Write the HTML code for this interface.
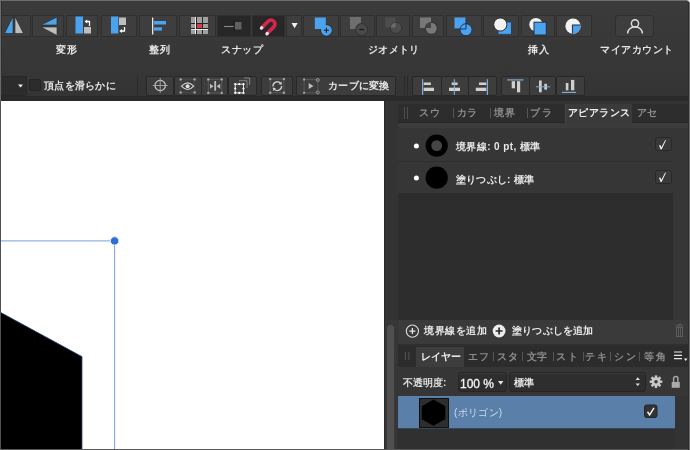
<!DOCTYPE html>
<html lang="ja"><head><meta charset="utf-8">
<style>
*{box-sizing:border-box;margin:0;padding:0}
html,body{width:690px;height:450px;overflow:hidden;background:#393939;font-family:"Liberation Sans",sans-serif;}
.a{position:absolute}
.t{position:absolute;white-space:nowrap;color:#e6e6e6;font-size:10px;line-height:12px;font-weight:700;will-change:transform}
.s{}
.g{color:#8c8c8c}
.b1{position:absolute;top:15px;height:22px;background:#3e3e3e;border:1px solid #2f2f2f;border-radius:1px}
.b2{position:absolute;top:76px;height:20px;background:#3d3d3d;border:1px solid #282828;border-radius:2px}
svg{position:absolute;left:0;top:0;overflow:visible}
</style></head><body>
<!-- top line -->
<div class="a" style="left:0;top:0;width:690px;height:96px;background:linear-gradient(#3b3b3b,#343434)"></div>
<div class="a" style="left:0;top:0;width:690px;height:1px;background:#6c6c6c"></div>


<!-- row1 buttons -->
<div class="b1" style="left:0;width:31px"></div>
<div class="b1" style="left:32px;width:32px"></div>
<div class="b1" style="left:66px;width:32px"></div>
<div class="b1" style="left:101px;width:36px"></div>
<div class="b1" style="left:139px;width:38px"></div>
<div class="b1" style="left:179px;width:37px"></div>
<div class="b1" style="left:217px;width:34px;background:#272727"></div>
<div class="b1" style="left:252px;width:33px;background:#272727"></div>
<div class="b1" style="left:286px;width:16px"></div>
<div class="b1" style="left:303px;width:36px"></div>
<div class="b1" style="left:340px;width:35px"></div>
<div class="b1" style="left:376px;width:34px"></div>
<div class="b1" style="left:412px;width:32px"></div>
<div class="b1" style="left:446px;width:36px"></div>
<div class="b1" style="left:483px;width:36px"></div>
<div class="b1" style="left:521px;width:34px"></div>
<div class="b1" style="left:556px;width:36px"></div>
<div class="b1" style="left:615px;width:39px;border-radius:3px"></div>

<!-- row1 labels -->
<div class="t s" style="left:56px;top:44px;letter-spacing:1px">変形</div>
<div class="t s" style="left:149px;top:44px;letter-spacing:1px">整列</div>
<div class="t s" style="left:221px;top:44px;letter-spacing:0.5px">スナップ</div>
<div class="t s" style="left:368px;top:44px;letter-spacing:0.3px">ジオメトリ</div>
<div class="t s" style="left:528px;top:44px;letter-spacing:1px">挿入</div>
<div class="t s" style="left:600px;top:44px;letter-spacing:0.5px">マイアカウント</div>

<!-- row2 -->
<div class="b2" style="left:-2px;width:29px;background:#2c2c2c"></div>
<div class="a" style="left:29px;top:79px;width:12px;height:12px;background:#2c2c2c;border:1px solid #252525;border-radius:2px"></div>
<div class="t s" style="left:44px;top:80px;letter-spacing:0.3px">頂点を滑らかに</div>
<div class="a" style="left:137px;top:76px;width:1px;height:20px;background:#2a2a2a"></div>
<div class="b2" style="left:146px;width:28px"></div>
<div class="b2" style="left:174px;width:28px"></div>
<div class="b2" style="left:201px;width:27px"></div>
<div class="b2" style="left:228px;width:29px"></div>
<div class="b2" style="left:261px;width:32px"></div>
<div class="b2" style="left:296px;width:100px"></div>
<div class="t s" style="left:328px;top:80px;letter-spacing:0.3px">カーブに変換</div>
<div class="a" style="left:404px;top:76px;width:1px;height:20px;background:#2a2a2a"></div>
<div class="a" style="left:407px;top:76px;width:1px;height:20px;background:#2a2a2a"></div>
<div class="b2" style="left:412px;width:30px"></div>
<div class="b2" style="left:441px;width:28px"></div>
<div class="b2" style="left:468px;width:29px"></div>
<div class="b2" style="left:501px;width:29px"></div>
<div class="b2" style="left:529px;width:27px"></div>
<div class="b2" style="left:556px;width:29px"></div>

<!-- toolbar bottom border -->
<div class="a" style="left:0;top:96px;width:690px;height:5px;background:#2a2a2a"></div>

<!-- canvas -->
<div class="a" style="left:0;top:101px;width:384px;height:349px;background:#fff"></div>
<div class="a" style="left:0;top:0;width:1px;height:101px;background:#6a6a6a"></div>
<div class="a" style="left:1px;top:1px;width:1px;height:95px;background:#303030"></div>
<div class="a" style="left:0;top:101px;width:1px;height:349px;background:#525252"></div>
<div class="a" style="left:0;top:449px;width:384px;height:1px;background:#5a5a5a"></div>

<!-- gutter -->
<div class="a" style="left:384px;top:101px;width:14px;height:349px;background:#333"></div>
<div class="a" style="left:384px;top:101px;width:1px;height:349px;background:#2a2a2a"></div>
<div class="a" style="left:385px;top:320px;width:12px;height:130px;background:#373737"></div>
<div class="a" style="left:387px;top:325px;width:7px;height:130px;background:#505050;border-radius:3.5px"></div>

<!-- right panel -->
<div class="a" style="left:398px;top:101px;width:292px;height:349px;background:#333"></div>

<!-- tab bar -->
<div class="a" style="left:398px;top:104px;width:290px;height:19px;background:#2d2d2d;border-bottom:1px solid #262626"></div>
<div class="a" style="left:565px;top:104px;width:67px;height:19px;background:#3a3a3a;border-left:1px solid #474747"></div>
<div class="a" style="left:398px;top:123px;width:290px;height:5px;background:#3c3c3c;border-radius:2px 0 0 2px"></div>
<div class="t g" style="left:419px;top:107px;letter-spacing:0.5px">スウ</div>
<div class="t g" style="left:457px;top:107px">カラ</div>
<div class="t g" style="left:494px;top:107px;letter-spacing:1px">境界</div>
<div class="t g" style="left:530px;top:107px;letter-spacing:1.5px">ブラ</div>
<div class="t" style="left:568px;top:107px;letter-spacing:0.4px;color:#f0f0f0">アピアランス</div>
<div class="t g" style="left:637px;top:107px">アセ</div>

<!-- list rows -->
<div class="a" style="left:673px;top:128px;width:16px;height:192px;background:#363636"></div>
<div class="a" style="left:398px;top:128px;width:275px;height:65px;background:#363636"></div>
<div class="a" style="left:398px;top:161px;width:275px;height:1px;background:#2e2e2e"></div>
<div class="a" style="left:398px;top:193px;width:275px;height:127px;background:#2d2d2d"></div>
<div class="t" style="left:456px;top:141px;letter-spacing:0.4px">境界線: 0 pt, 標準</div>
<div class="t" style="left:456px;top:174px;letter-spacing:0.2px">塗りつぶし: 標準</div>

<!-- footer -->
<div class="a" style="left:398px;top:320px;width:290px;height:24px;background:#3a3a3a"></div>
<div class="a" style="left:398px;top:344px;width:290px;height:2px;background:#2f2f2f"></div>
<div class="t" style="left:424px;top:325px;letter-spacing:0.5px">境界線を追加</div>
<div class="t" style="left:512px;top:325px;letter-spacing:0.2px">塗りつぶしを追加</div>

<!-- layers tabs -->
<div class="a" style="left:398px;top:346px;width:290px;height:21px;background:#2c2c2c"></div>
<div class="a" style="left:416px;top:347px;width:48px;height:20px;background:#3d3d3d"></div>
<div class="t" style="left:421px;top:351px;font-weight:700;color:#f0f0f0">レイヤー</div>
<div class="t g" style="left:468px;top:351px;letter-spacing:1px">エフ</div>
<div class="t g" style="left:497px;top:351px;letter-spacing:1px">スタ</div>
<div class="t g" style="left:527px;top:351px">文字</div>
<div class="t g" style="left:556px;top:351px;letter-spacing:1.5px">スト</div>
<div class="t g" style="left:585px;top:351px;letter-spacing:2px">テキ</div>
<div class="t g" style="left:614px;top:351px;letter-spacing:2px">シン</div>
<div class="t g" style="left:644px;top:351px;letter-spacing:2px">等角</div>

<!-- opacity row -->
<div class="a" style="left:398px;top:367px;width:291px;height:29px;background:#363636"></div>
<div class="t" style="left:403px;top:377px;color:#dcdcdc">不透明度:</div>
<div class="a" style="left:458px;top:372px;width:49px;height:20px;background:#2e2e2e;border:1px solid #252525;border-radius:3px;box-shadow:inset 0 1px 0 #3a3a3a"></div>
<div class="t" style="left:460px;top:378px;font-size:12px;color:#f4f4f4;font-weight:400;-webkit-text-stroke:0.3px #f4f4f4">100 %</div>
<div class="a" style="left:509px;top:372px;width:137px;height:20px;background:#2e2e2e;border:1px solid #252525;border-radius:3px;box-shadow:inset 0 1px 0 #3a3a3a"></div>
<div class="t" style="left:514px;top:377px">標準</div>

<!-- layer row -->
<div class="a" style="left:398px;top:396px;width:277px;height:33px;background:#5a7fa9;border-bottom:1px solid #33475f"></div>
<div class="a" style="left:419px;top:398px;width:30px;height:30px;background:#2e2e2e;border:1px solid #111"></div>
<div class="t" style="left:454px;top:407px;letter-spacing:0.3px;color:#cddcee;font-weight:400">(ポリゴン)</div>
<div class="a" style="left:398px;top:429px;width:277px;height:20px;background:#303030"></div>
<div class="a" style="left:384px;top:449px;width:306px;height:1px;background:#575757"></div>

<div class="a" style="left:688px;top:1px;width:1px;height:449px;background:#2c2c2c"></div>
<div class="a" style="left:689px;top:0;width:1px;height:450px;background:#6a6a6a"></div>
<svg width="690" height="450" viewBox="0 0 690 450">
 <!-- flip h -->
 <path d="M4.5 33.5 L13 16.5 L13 33.5Z" fill="#4ba3f0" stroke="#222" stroke-width="0.6"/>
 <path d="M15 16.5 L15 33.5 L23.5 33.5Z" fill="#bdbdbd" stroke="#222" stroke-width="0.6"/>
 <!-- flip v -->
 <path d="M41 25 L57 17 L57 25Z" fill="#4ba3f0" stroke="#222" stroke-width="0.6"/>
 <path d="M41 27 L57 27 L57 35.5Z" fill="#bdbdbd" stroke="#222" stroke-width="0.6"/>
 <!-- rotate left -->
 <rect x="75.5" y="16.5" width="7.5" height="17" fill="#4ba3f0"/>
 <rect x="84" y="27" width="7" height="6.5" fill="#bdbdbd"/>
 <path d="M89.5 26 V21.5 H86.5" fill="none" stroke="#fff" stroke-width="1.3"/>
 <path d="M84.5 21.5 L87.2 19.4 L87.2 23.6Z" fill="#fff"/>
 <!-- rotate right -->
 <rect x="111" y="16.5" width="7.3" height="17" fill="#4ba3f0"/>
 <rect x="119" y="17.5" width="7" height="7.5" fill="#bdbdbd"/>
 <path d="M124.5 27 V31 H121.5" fill="none" stroke="#fff" stroke-width="1.3"/>
 <path d="M119.3 31 L122 28.9 L122 33.1Z" fill="#fff"/>
 <!-- align -->
 <rect x="152" y="17.5" width="1.3" height="17" fill="#e8e8e8"/>
 <rect x="154" y="21" width="12" height="3.5" fill="#4ba3f0"/>
 <rect x="154" y="27.3" width="8" height="3.3" fill="#4ba3f0"/>
 <!-- snap grid -->
 <g shape-rendering="crispEdges">
 <rect x="191" y="17" width="17" height="17" fill="#a0a0a0"/>
 <rect x="197" y="24" width="5" height="4" fill="#e0384c"/>
 <rect x="196" y="17" width="1" height="17" fill="#262626"/>
 <rect x="202" y="17" width="1" height="17" fill="#262626"/>
 <rect x="191" y="23" width="17" height="1" fill="#262626"/>
 <rect x="191" y="28" width="17" height="1" fill="#262626"/>
 <rect x="195" y="17" width="1" height="17" fill="#e8e8e8"/>
 <rect x="191" y="29" width="17" height="1" fill="#e8e8e8"/>
 </g>
 <!-- snap dark icon -->
 <rect x="234.5" y="22" width="7" height="7.5" fill="#606060"/>
 <path d="M224 26.5 H234" stroke="#8a8a8a" stroke-width="1.1"/>
 <path d="M234.2 21 V31" stroke="#151515" stroke-width="1"/>
 <!-- magnet -->
 <path d="M261.4 28.1 L268.2 21.3 A3.95 3.95 0 0 1 273.8 26.9 L266.9 33.8" fill="none" stroke="#d3264a" stroke-width="3.7"/>
 <path d="M261.4 28.1 L261.8 27.7 M266.9 33.8 L267.3 33.4" stroke="#f0e4e8" stroke-width="3.2" stroke-linecap="round"/>
 <!-- dropdown tri -->
 <path d="M291.5 23 H297.7 L294.6 28.3Z" fill="#f0f0f0"/>
 <!-- geometry add -->
 <circle cx="326.4" cy="30.3" r="6.2" fill="#2e2e2e"/>
 <rect x="314.8" y="17.5" width="11" height="11.5" fill="#4ba3f0"/>
 <circle cx="326.4" cy="30.3" r="5.4" fill="#4ba3f0"/>
 <path d="M326.4 27.8 V32.8 M323.9 30.3 H328.9" stroke="#1c1c1c" stroke-width="1.1"/>
 <!-- subtract -->
 <rect x="350" y="17" width="11" height="12" fill="#6e6e6e"/>
 <circle cx="361.6" cy="29.5" r="6.4" fill="#333"/>
 <circle cx="361.6" cy="29.5" r="5.4" fill="#4a4a4a"/>
 <path d="M359.3 29.5 H364" stroke="#1a1a1a" stroke-width="1.3"/>
 <!-- intersect -->
 <rect x="385.2" y="17.5" width="10.5" height="10" fill="#4c4c4c"/>
 <circle cx="396" cy="27.9" r="6" fill="#353535"/>
 <circle cx="396" cy="27.9" r="5.2" fill="#4c4c4c"/>
 <path d="M390.8 27.5 A5.2 5.2 0 0 1 395.6 22.7 V27.5Z" fill="#6a6a6a"/>
 <!-- xor -->
 <rect x="420" y="17.5" width="11" height="10.5" fill="#787878"/>
 <circle cx="431.3" cy="28.3" r="6.4" fill="#333"/>
 <circle cx="431.3" cy="28.3" r="5.5" fill="#787878"/>
 <path d="M425.8 28 A5.5 5.5 0 0 1 431 22.8 V28Z" fill="#444"/>
 <!-- divide -->
 <rect x="454.5" y="17.5" width="11.5" height="11.5" fill="#4ba3f0"/>
 <circle cx="466" cy="29.7" r="6" fill="#4ba3f0" stroke="#1f3550" stroke-width="1"/>
 <path d="M454.5 29 H466 V17.5" fill="none" stroke="#1f3550" stroke-width="1"/>
 <!-- insert behind -->
 <rect x="498" y="22" width="13.3" height="12.3" fill="#4ba3f0" stroke="#263a52" stroke-width="0.8"/>
 <circle cx="500.3" cy="24.5" r="6.6" fill="#f2f2f2" stroke="#2a2a2a" stroke-width="1"/>
 <!-- insert front -->
 <circle cx="535.9" cy="24.5" r="6.6" fill="#f2f2f2"/>
 <rect x="534" y="22.2" width="12.3" height="12.8" fill="#4ba3f0" stroke="#1f2f45" stroke-width="1"/>
 <!-- insert inside -->
 <circle cx="573" cy="26.2" r="7.6" fill="#f2f2f2"/>
 <clipPath id="cc"><circle cx="573" cy="26.2" r="7.6"/></clipPath>
 <rect x="572.4" y="25" width="11" height="10" fill="#4ba3f0" stroke="#1f2f45" stroke-width="1" clip-path="url(#cc)"/>
 <!-- account -->
 <circle cx="635" cy="23.4" r="3.6" fill="none" stroke="#e0e0e0" stroke-width="1.4"/>
 <path d="M627.6 33.4 A7.4 6.6 0 0 1 642.4 33.4" fill="none" stroke="#e0e0e0" stroke-width="1.4"/>

 <!-- row2 dropdown tri -->
 <path d="M18 84.5 H23 L20.5 87.5Z" fill="#eee"/>
 <!-- crosshair -->
 <circle cx="160.2" cy="85.5" r="5.2" fill="none" stroke="#c8c8c8" stroke-width="1.2"/>
 <path d="M152.8 85.5 H167.8 M160.2 78 V93" stroke="#a8a8a8" stroke-width="0.9"/>
 <!-- eye -->
 <path d="M180.7 79.4 H194.6 V92.4 H180.7Z" fill="none" stroke="#555" stroke-width="0.5"/>
 <circle cx="180.7" cy="79.4" r="1.2" fill="#a8a8a8"/><circle cx="194.6" cy="79.4" r="1.2" fill="#a8a8a8"/>
 <circle cx="180.7" cy="92.4" r="1.2" fill="#a8a8a8"/><circle cx="194.6" cy="92.4" r="1.2" fill="#a8a8a8"/>
 <path d="M181.5 86.2 Q187.6 79.5 193.7 86.2 Q187.6 92.8 181.5 86.2Z" fill="none" stroke="#cfcfcf" stroke-width="1.2"/>
 <circle cx="187.6" cy="86.2" r="2" fill="#e0e0e0"/>
 <!-- transform frame -->
 <path d="M208.3 79.4 H221.7 V92.9 H208.3Z" fill="none" stroke="#6a6a6a" stroke-width="0.6"/>
 <circle cx="208.3" cy="79.4" r="1.2" fill="#a8a8a8"/><circle cx="221.7" cy="79.4" r="1.2" fill="#a8a8a8"/>
 <circle cx="208.3" cy="92.9" r="1.2" fill="#a8a8a8"/><circle cx="221.7" cy="92.9" r="1.2" fill="#a8a8a8"/>
 <rect x="214.3" y="81" width="1.8" height="9.7" fill="#bdbdbd"/>
 <path d="M213.6 86.3 L210 83.8 V88.8Z M216.6 86.3 L220.2 83.8 V88.8Z" fill="#bdbdbd"/>
 <!-- dotted square -->
 <path d="M244 78 H249.6 V85" fill="none" stroke="#8a8a8a" stroke-width="0.9"/>
 <path d="M239 80.7 H247 V88" fill="none" stroke="#8a8a8a" stroke-width="0.9"/>
 <rect x="235.2" y="84.2" width="8.3" height="8.7" fill="#3f3f3f" stroke="#f0f0f0" stroke-width="0.9"/>
 <g fill="#fff"><circle cx="235.2" cy="84.2" r="1.1"/><circle cx="239.3" cy="84.2" r="1.1"/><circle cx="243.5" cy="84.2" r="1.1"/>
 <circle cx="235.2" cy="88.5" r="1.1"/><circle cx="243.5" cy="88.5" r="1.1"/>
 <circle cx="235.2" cy="92.9" r="1.1"/><circle cx="239.3" cy="92.9" r="1.1"/><circle cx="243.5" cy="92.9" r="1.1"/></g>
 <!-- refresh -->
 <path d="M270.2 79.1 H283.9 V92.8 H270.2Z" fill="none" stroke="#6a6a6a" stroke-width="0.6"/>
 <circle cx="270.2" cy="79.1" r="1.2" fill="#a8a8a8"/><circle cx="283.9" cy="79.1" r="1.2" fill="#a8a8a8"/>
 <circle cx="270.2" cy="92.8" r="1.2" fill="#a8a8a8"/><circle cx="283.9" cy="92.8" r="1.2" fill="#a8a8a8"/>
 <path d="M273 86.5 A4.3 4.3 0 0 1 280.5 83.3 M281.6 86 A4.3 4.3 0 0 1 274.1 89.1" fill="none" stroke="#cfcfcf" stroke-width="1.3"/>
 <path d="M281.5 81.5 L281.8 84.8 L278.6 84.2Z M273.1 90.9 L272.8 87.6 L276 88.2Z" fill="#cfcfcf"/>
 <!-- convert to curves -->
 <path d="M304.1 79.6 H317.8 V92.8 H304.1Z" fill="none" stroke="#6a6a6a" stroke-width="0.6"/>
 <circle cx="304.1" cy="79.6" r="1.1" fill="#a8a8a8"/><circle cx="304.1" cy="92.8" r="1.1" fill="#a8a8a8"/>
 <circle cx="317.8" cy="80" r="1.5" fill="none" stroke="#a8a8a8" stroke-width="0.8"/><circle cx="317.8" cy="92.4" r="1.5" fill="none" stroke="#a8a8a8" stroke-width="0.8"/>
 <path d="M308.7 83 L313.5 86 L308.7 89Z" fill="#bdbdbd"/>
 <!-- align left/center/right -->
 <rect x="422" y="79.2" width="1.2" height="15.7" fill="#80acdc"/>
 <rect x="423.7" y="82.5" width="7.2" height="2.5" fill="#d0d0d0"/>
 <rect x="423.7" y="87.7" width="10.3" height="3.3" fill="#d0d0d0"/>
 <rect x="451.7" y="82.5" width="5.9" height="2.5" fill="#d0d0d0"/>
 <rect x="449" y="87.7" width="11" height="3.3" fill="#d0d0d0"/>
 <rect x="453.8" y="79.2" width="1.1" height="15.7" fill="#80acdc"/>
 <rect x="486.8" y="79.2" width="1.2" height="15.7" fill="#80acdc"/>
 <rect x="479" y="82.5" width="7.3" height="2.5" fill="#d0d0d0"/>
 <rect x="475.8" y="87.7" width="10.5" height="3.3" fill="#d0d0d0"/>
 <!-- align top/mid/bottom -->
 <rect x="507.2" y="79.3" width="16.3" height="1.2" fill="#80acdc"/>
 <rect x="511.7" y="81.2" width="3.3" height="7.1" fill="#d0d0d0"/>
 <rect x="517" y="81.2" width="3.2" height="11.1" fill="#d0d0d0"/>
 <rect x="539" y="80.5" width="2.7" height="11.8" fill="#d0d0d0"/>
 <rect x="544.3" y="83.8" width="2.7" height="5.8" fill="#d0d0d0"/>
 <rect x="535.9" y="86.3" width="14.3" height="1" fill="#80acdc"/>
 <rect x="562" y="91.8" width="14" height="1.2" fill="#80acdc"/>
 <rect x="565.8" y="83" width="2.6" height="7.3" fill="#d0d0d0"/>
 <rect x="571" y="79.9" width="3.3" height="10.4" fill="#d0d0d0"/>

 <!-- canvas selection -->
 <path d="M1 312.5 L82 356.5 V449 H1Z" fill="#000"/>
 <path d="M1 312.7 L82 356.7 V449" fill="none" stroke="#2a4a80" stroke-width="0.8"/>
 <path d="M1 240.9 H114.6 V449" fill="none" stroke="#7aa2dc" stroke-width="1"/>
 <circle cx="114.6" cy="240.9" r="4.2" fill="#2f6fd0" stroke="#dfe9f7" stroke-width="1"/>

 <!-- panel tab grips & separators -->
 <path d="M404.5 107 V119 M407.5 107 V119" stroke="#4c4c4c" stroke-width="1"/>
 <path d="M453.5 108 V118 M490.5 108 V118 M527.5 108 V118" stroke="#555" stroke-width="1"/>
 <!-- list bullets and circles -->
 <circle cx="416.4" cy="145.9" r="2.5" fill="#fff"/>
 <circle cx="436.7" cy="145.6" r="11.1" fill="#000"/>
 <circle cx="436.7" cy="145.6" r="5.4" fill="#454545"/>
 <circle cx="416.4" cy="178" r="2.5" fill="#fff"/>
 <circle cx="436.7" cy="177.7" r="11.1" fill="#000"/>
 <!-- checkboxes -->
 <rect x="655.5" y="137.5" width="16" height="13" rx="2" fill="#3a3a3a" stroke="#282828" stroke-width="1"/>
 <path d="M659 145.3 L660.3 145 L661.4 147.3 L665.2 140 L666 140.3 L661.6 149.5 L660.6 149.5Z" fill="#f0f0f0"/>
 <rect x="655.5" y="170.5" width="16" height="13" rx="2" fill="#3a3a3a" stroke="#282828" stroke-width="1"/>
 <path d="M659 177.8 L660.3 177.5 L661.4 179.8 L665.2 172.5 L666 172.8 L661.6 182 L660.6 182Z" fill="#f0f0f0"/>

 <!-- footer icons -->
 <circle cx="412.4" cy="331.1" r="6.1" fill="none" stroke="#dcdcdc" stroke-width="1.1"/>
 <path d="M412.4 328.1 V334.1 M409.4 331.1 H415.4" stroke="#e8e8e8" stroke-width="1.3"/>
 <circle cx="499.1" cy="331" r="6.4" fill="#ededed"/>
 <path d="M499.1 327.5 V334.5 M495.6 331 H502.6" stroke="#2a2a2a" stroke-width="1.7"/>
 <!-- trash -->
 <path d="M675.5 326 H683.5 M677.5 324.5 H681.5" stroke="#5c5c5c" stroke-width="1.2"/>
 <rect x="676.5" y="327.5" width="6" height="9" fill="none" stroke="#5c5c5c" stroke-width="1"/>
 <path d="M678.5 328 V336 M680.5 328 V336" stroke="#5c5c5c" stroke-width="0.9"/>

 <!-- layers grip / separators -->
 <path d="M405.4 352 V360 M408.9 352 V360" stroke="#555" stroke-width="1"/>
 <path d="M493.5 352 V361 M522.5 352 V361 M553.5 352 V361 M583.5 352 V361 M610.5 352 V361 M639.5 352 V361" stroke="#555" stroke-width="1"/>
 <path d="M674 352 H682 M674 355.3 H682 M674 358.6 H682" stroke="#e8e8e8" stroke-width="1.2"/>
 <path d="M684 358.5 H687.5 L685.7 361Z" fill="#eee"/>
 <!-- dropdown arrows -->
 <path d="M498 381 H503.4 L500.7 384.8Z" fill="#e4e4e4"/>
 <path d="M635.6 379.9 H639.9 L637.75 377.3Z M635.6 383.5 H639.9 L637.75 386.1Z" fill="#e0e0e0"/>
 <!-- gear -->
 <g transform="translate(656 381.7)" fill="#c8c8c8">
  <circle r="4.4"/>
  <g id="tooth"><rect x="-1.25" y="-6.3" width="2.5" height="3"/></g>
  <use href="#tooth" transform="rotate(45)"/><use href="#tooth" transform="rotate(90)"/><use href="#tooth" transform="rotate(135)"/>
  <use href="#tooth" transform="rotate(180)"/><use href="#tooth" transform="rotate(225)"/><use href="#tooth" transform="rotate(270)"/><use href="#tooth" transform="rotate(315)"/>
  <circle r="1.8" fill="#3a3a3a"/>
 </g>
 <!-- lock -->
 <path d="M673.6 382 V378.6 A2.15 2.15 0 0 1 677.9 378.6 V382" fill="none" stroke="#aaa" stroke-width="1.4"/>
 <rect x="671.7" y="382" width="8.1" height="5.8" fill="#aaa"/>
 <!-- layer thumb hexagon -->
 <path d="M433.4 399.6 L445.3 406.2 V419.3 L433.4 425.7 L421.8 419.3 V406.2Z" fill="#000"/>
 <!-- layer checkbox -->
 <rect x="644.5" y="405" width="12.5" height="12.5" rx="2" fill="#333" stroke="#262626" stroke-width="1"/>
 <path d="M647.5 411.8 L649.6 414.8 L654 407.8" fill="none" stroke="#eee" stroke-width="1.5"/>
 <!-- corner -->
 <path d="M687 0 H690 V3Z" fill="#ddd"/>
</svg>
</body></html>
